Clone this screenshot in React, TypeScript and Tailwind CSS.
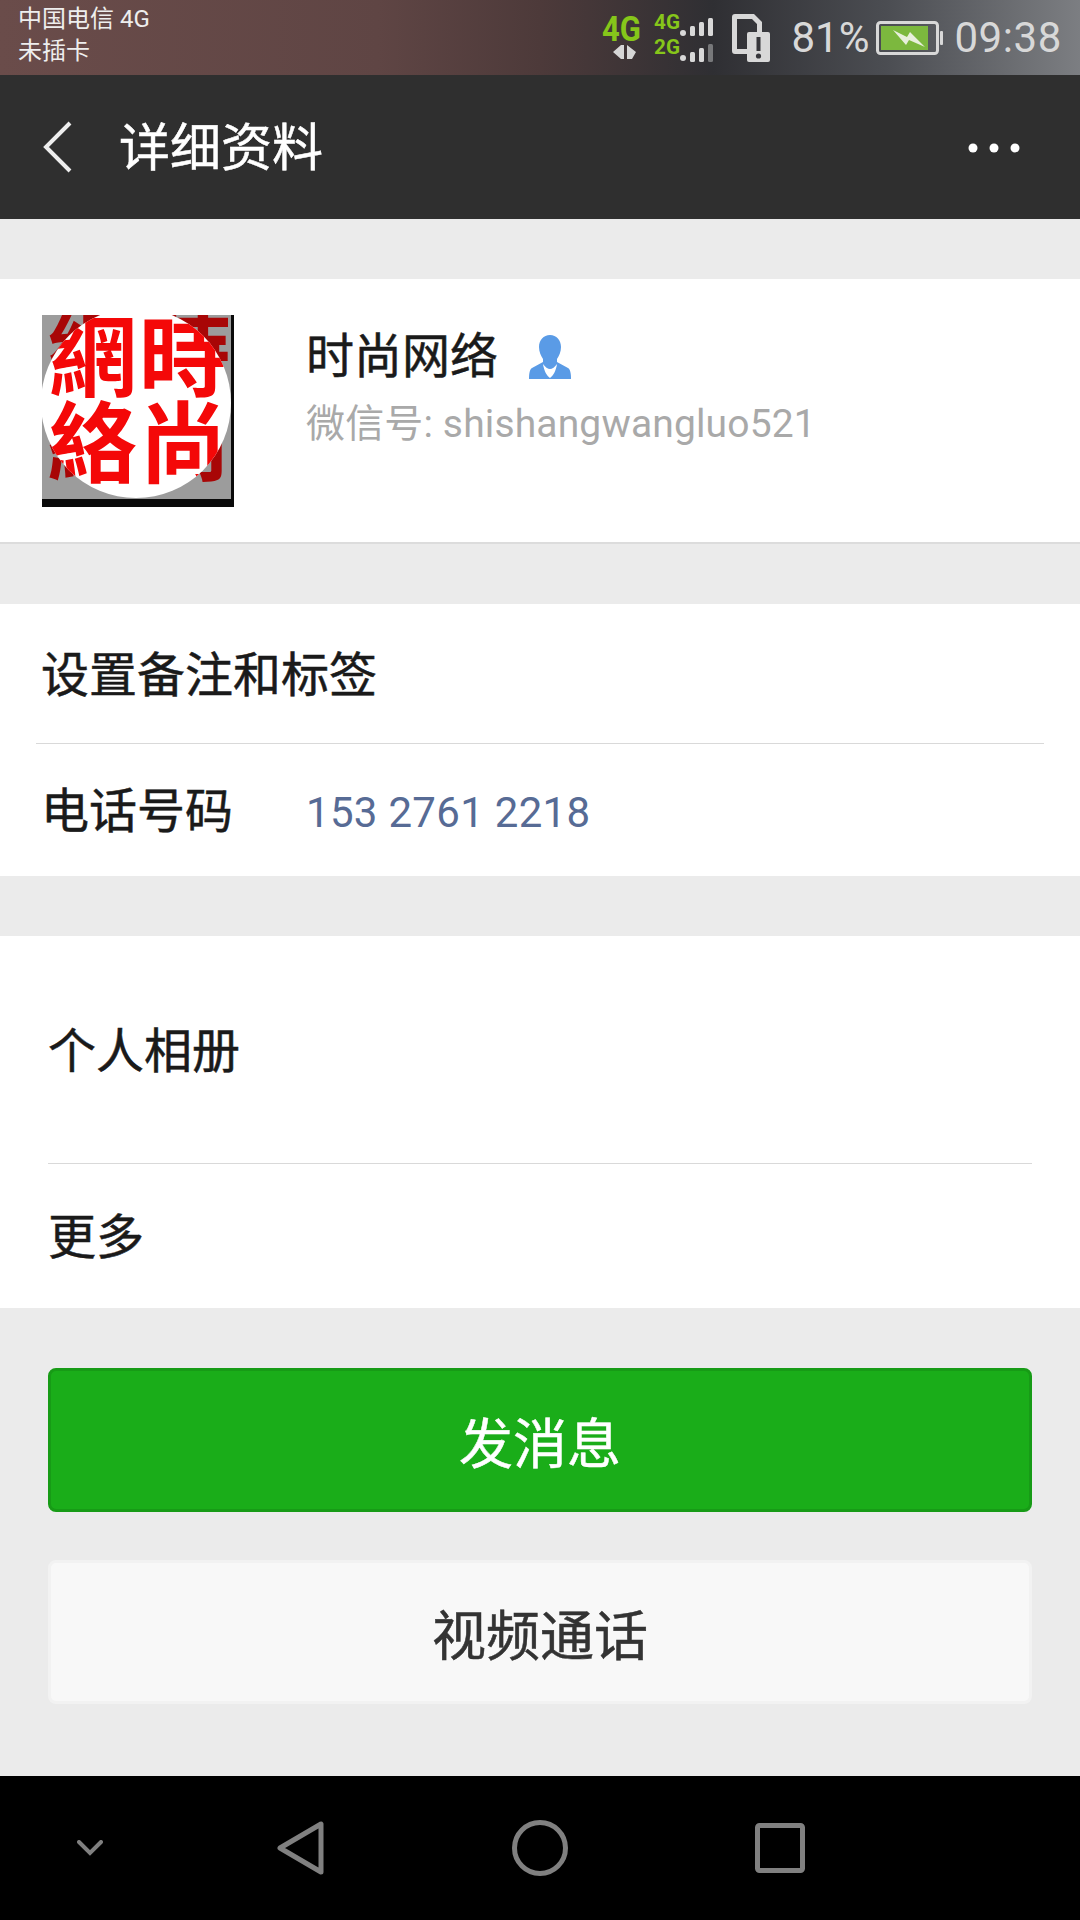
const font = 'font-[Roboto,"Noto_Sans_CJK_SC",sans-serif]';
const cjkWeight = '[-webkit-text-stroke:0.5px_currentColor]';

function NetworkIcons() {
  return (
    <svg width="112" height="50" viewBox="0 0 112 50">
      <text x="0" y="28" fontFamily="Roboto" fontWeight="700" fontSize="35" textLength="39" lengthAdjust="spacingAndGlyphs" fill="#86c61a">4G</text>
      {/* up / down activity arrows */}
      <path d="M22 32v14h-3l-8-7 8-7zM25 32l9 7-4 7h-5z" fill="#d6d6d6" />
      <text x="52" y="16" fontFamily="Roboto" fontWeight="700" fontSize="21" textLength="26" lengthAdjust="spacingAndGlyphs" fill="#86c61a">4G</text>
      <text x="52" y="41" fontFamily="Roboto" fontWeight="700" fontSize="21" textLength="26" lengthAdjust="spacingAndGlyphs" fill="#86c61a">2G</text>
      <g fill="#d8d8d8">
        <circle cx="81" cy="20" r="3" />
        <rect x="88" y="13" width="5" height="10" rx="1.5" />
        <rect x="97" y="9" width="5" height="14" rx="1.5" />
        <rect x="106" y="5" width="5" height="18" rx="1.5" />
        <circle cx="81" cy="45" r="3" />
        <rect x="88" y="39" width="5" height="10" rx="1.5" />
        <rect x="97" y="35" width="5" height="14" rx="1.5" />
        <rect x="106" y="31" width="5" height="18" rx="1.5" fill="#77787a" />
      </g>
    </svg>
  );
}

function SimIcon() {
  return (
    <svg width="38" height="48" viewBox="0 0 38 48">
      <path d="M3 0h19l8 8v10h-5V10l-5-5H5v30h10v5H3a3 3 0 0 1-3-3V3a3 3 0 0 1 3-3z" fill="#d8d8d8" />
      <rect x="15" y="18" width="23" height="30" rx="2" fill="#d8d8d8" />
      <rect x="24.5" y="23" width="4" height="14" fill="#36363a" />
      <circle cx="26.5" cy="42" r="2.6" fill="#36363a" />
    </svg>
  );
}

function Battery() {
  return (
    <svg width="68" height="34" viewBox="0 0 68 34">
      <rect x="1.5" y="1.5" width="60" height="31" rx="3" fill="none" stroke="#d8d8d8" strokeWidth="3" />
      <rect x="64" y="10" width="3" height="14" rx="1" fill="#d8d8d8" />
      <rect x="5" y="5" width="47" height="24" fill="#7cb83e" />
      <path d="M17 9l14 7 3-5 15 15-16-7-3 5z" fill="#e8efdc" />
    </svg>
  );
}

// seal-style avatar: red characters on a white disc, over a darker copy of the same characters
function Avatar() {
  return (
    <svg width="192" height="192" viewBox="0 0 192 192" className="shrink-0 blur-[0.7px]">
      <defs>
        <clipPath id="seal">
          <circle cx="94" cy="88" r="95" />
        </clipPath>
      </defs>
      <rect width="192" height="192" fill="#9c9c9c" />
      <rect x="189" width="3" height="192" fill="#0a0a0a" />
      <rect y="184" width="192" height="8" fill="#0a0a0a" />
      <g fontFamily="Noto Sans CJK TC" fontWeight="700" fontSize="88" fill="#a80606">
        <text x="5" y="68">網</text>
        <text x="101" y="68">時</text>
        <text x="5" y="158">絡</text>
        <text x="101" y="158">尚</text>
      </g>
      <circle cx="94" cy="88" r="95" fill="#ffffff" />
      <g clipPath="url(#seal)" fontFamily="Noto Sans CJK TC" fontWeight="700" fontSize="88" fill="#f40808">
        <text x="7" y="74">網</text>
        <text x="97" y="74">時</text>
        <text x="7" y="160">絡</text>
        <text x="97" y="160">尚</text>
      </g>
    </svg>
  );
}

function PersonBadge() {
  return (
    <svg width="44" height="44" viewBox="0 0 44 44" className="ml-[30px]">
      <path d="M22 0c6.500 0 11 5 11 12 0 5-2 9-4 12v3l11 6c2 1 3 5 3 10v1H1v-1c0-5 1-9 3-10l11-6v-3c-2-3-4-7-4-12 0-7 4.500-12 11-12z" fill="#5a9be6" />
      <path d="M15 29c1 7 4 12 7 14 3-2 6-7 7-14-2 3-5 5-7 5s-5-2-7-5z" fill="#ffffff" />
    </svg>
  );
}

export default function App() {
  return (
    <div className={`flex h-[1920px] w-[1080px] flex-col overflow-hidden bg-[#ebebeb] ${font}`}>
      {/* system status bar */}
      <div className="flex h-[75px] shrink-0 items-center bg-[linear-gradient(90deg,#6a4c4a_0%,#5f4544_35%,#4d3a3a_50%,#2f2f33_66%,#4b4d52_82%,#7c7e82_100%)] pl-[18px]">
        <div className="mb-[6px] flex flex-col text-[24px] leading-[32px] text-[#eeeeee]">
          <span>中国电信 4G</span>
          <span>未插卡</span>
        </div>
        <div className="ml-auto flex items-center pr-[18px]">
          <NetworkIcons />
          <div className="ml-[18px]">
            <SimIcon />
          </div>
          <span className="ml-[21px] text-[42px] leading-none text-[#d8d8d8]">81%</span>
          <div className="ml-[7px]">
            <Battery />
          </div>
          <span className="ml-[10px] text-[42px] leading-none tracking-[0.6px] text-[#d8d8d8]">09:38</span>
        </div>
      </div>

      {/* title bar */}
      <div className="flex h-[144px] shrink-0 items-center bg-[#2f2f2f] pl-[42px] pr-[60px]">
        <svg width="32" height="52" viewBox="0 0 32 52">
          <path d="M28 2L4 26l24 24" fill="none" stroke="#eeeeee" strokeWidth="4" />
        </svg>
        <span className={`ml-[45px] mt-[3px] text-[51px] leading-none text-white ${cjkWeight}`}>详细资料</span>
        <svg width="52" height="12" viewBox="0 0 52 12" className="ml-auto mt-[2px]">
          <circle cx="5" cy="6" r="4.500" fill="#ffffff" />
          <circle cx="26" cy="6" r="4.500" fill="#ffffff" />
          <circle cx="47" cy="6" r="4.500" fill="#ffffff" />
        </svg>
      </div>

      {/* profile card */}
      <div className="mt-[60px] flex h-[265px] shrink-0 items-center border-b-2 border-[#dcdcdc] bg-white pl-[42px]">
        <Avatar />
        <div className="mb-[50px] ml-[72px] flex flex-col">
          <div className="flex items-center">
            <span className={`text-[48px] leading-[68px] text-[#1a1a1a] ${cjkWeight}`}>时尚网络</span>
            <PersonBadge />
          </div>
          <span className="mt-[8px] text-[39px] leading-[50px] tracking-[0.15px] text-[#a9a9a9]">微信号: shishangwangluo521</span>
        </div>
      </div>

      {/* remark and phone */}
      <div className="mt-[60px] flex shrink-0 flex-col bg-white">
        <div className={`flex h-[139px] items-center pl-[41px] pt-[4px] text-[48px] text-[#1a1a1a] ${cjkWeight}`}>设置备注和标签</div>
        <div className="mx-[36px] h-[1px] bg-[#d9d9d9]" />
        <div className="flex h-[132px] items-center pl-[41px] pt-[4px]">
          <span className={`w-[265px] text-[48px] text-[#1a1a1a] ${cjkWeight}`}>电话号码</span>
          <span className="text-[42px] tracking-[0.3px] text-[#576b95]">153 2761 2218</span>
        </div>
      </div>

      {/* album and more */}
      <div className="mt-[60px] flex shrink-0 flex-col bg-white">
        <div className={`flex h-[227px] items-center pl-[48px] pt-[4px] text-[48px] text-[#1a1a1a] ${cjkWeight}`}>个人相册</div>
        <div className="mx-[48px] h-[1px] bg-[#d9d9d9]" />
        <div className={`flex h-[144px] items-center pl-[48px] pt-[4px] text-[48px] text-[#1a1a1a] ${cjkWeight}`}>更多</div>
      </div>

      {/* action buttons */}
      <div className="mt-[60px] flex shrink-0 flex-col gap-[48px] px-[48px]">
        <button className={`flex h-[144px] items-center justify-center rounded-[8px] border-[3px] border-[#179b16] bg-[#1aad19] pt-[10px] text-[54px] text-white ${cjkWeight}`}>
          发消息
        </button>
        <button className={`flex h-[144px] items-center justify-center rounded-[8px] border-[3px] border-[#f2f2f2] bg-[#f8f8f8] pt-[10px] text-[54px] text-[#333333] ${cjkWeight}`}>
          视频通话
        </button>
      </div>

      {/* navigation keys */}
      <div className="mt-auto flex h-[144px] shrink-0 items-center bg-black pl-[77px]">
        <svg width="26" height="16" viewBox="0 0 26 16">
          <path d="M2 2l11 11L24 2" fill="none" stroke="#808080" strokeWidth="4" strokeLinecap="round" />
        </svg>
        <svg width="48" height="54" viewBox="0 0 48 54" className="ml-[174px]">
          <path d="M44 3v48L3 27z" fill="none" stroke="#808080" strokeWidth="5" strokeLinejoin="round" />
        </svg>
        <svg width="56" height="56" viewBox="0 0 56 56" className="ml-[187px]">
          <circle cx="28" cy="28" r="25.500" fill="none" stroke="#808080" strokeWidth="5" />
        </svg>
        <svg width="50" height="50" viewBox="0 0 50 50" className="ml-[187px]">
          <rect x="2.500" y="2.500" width="45" height="45" rx="2" fill="none" stroke="#808080" strokeWidth="5" />
        </svg>
      </div>
    </div>
  );
}
